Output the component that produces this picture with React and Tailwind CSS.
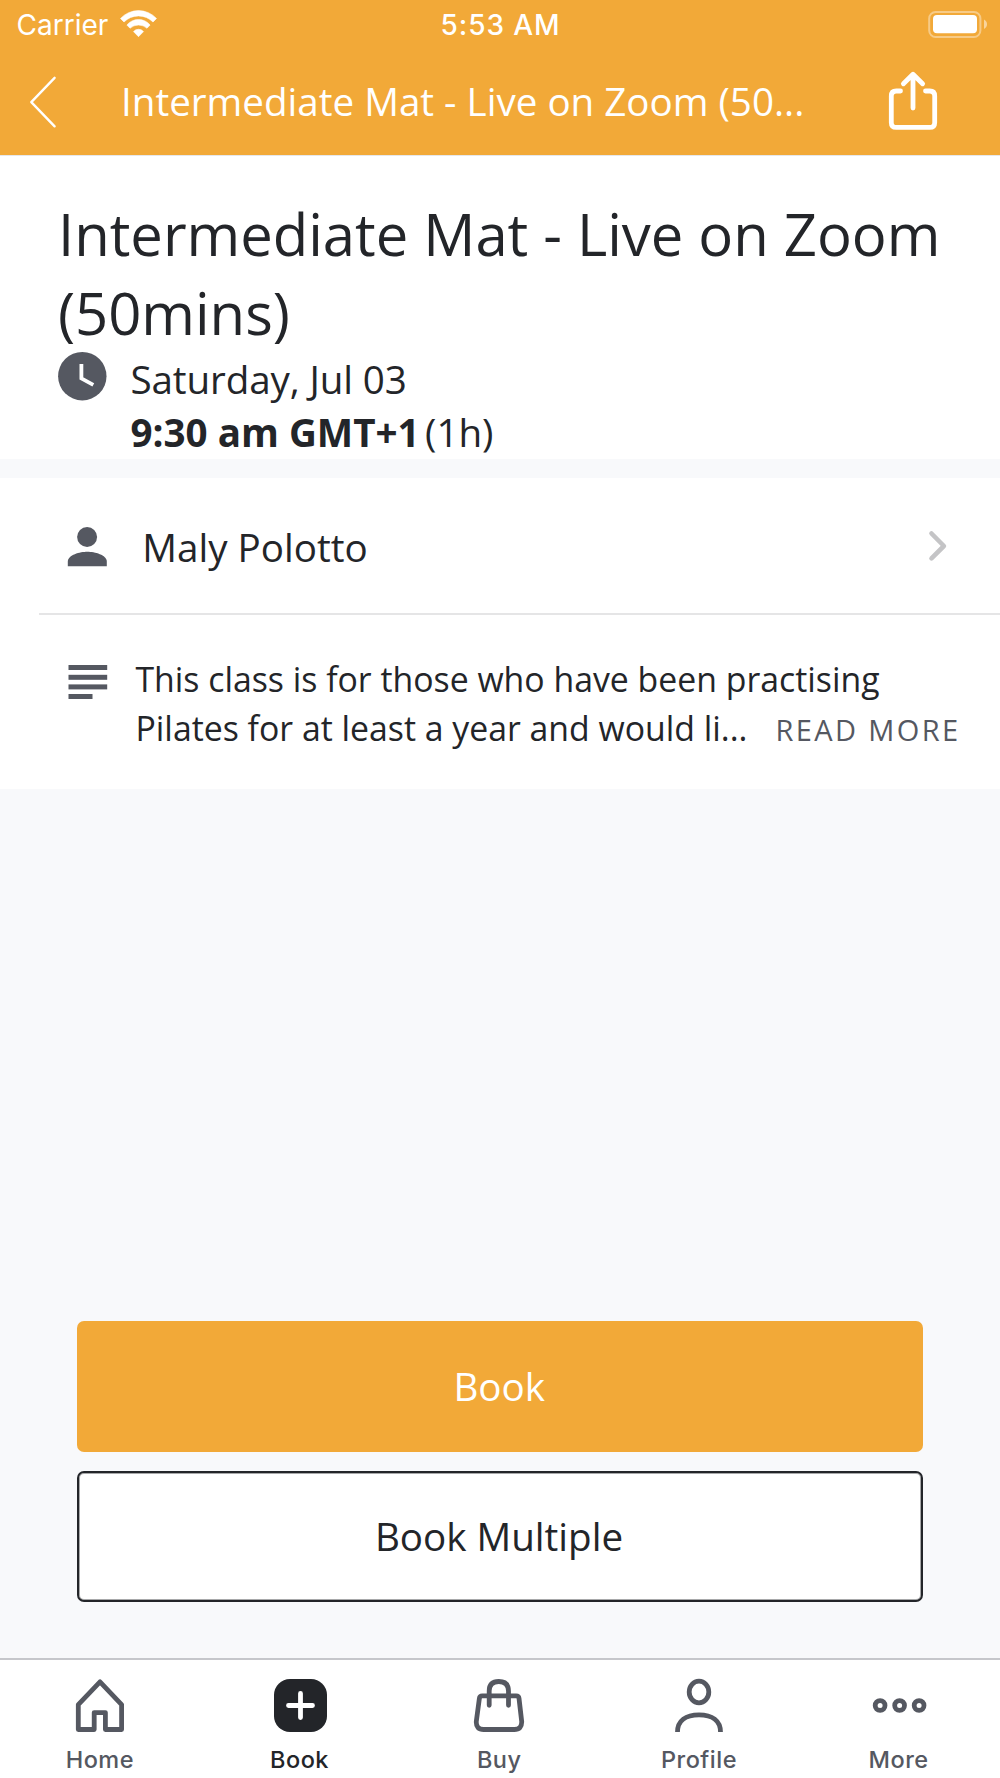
import React from "react";

function StatusBar() {
  return (
    <div className="flex h-[48px] items-start justify-between text-[28px] leading-[51px]">
      <div className="flex w-[380px] items-start pl-[16.5px]">
        <span className="w-[103.5px] whitespace-nowrap">Carrier</span>
        <svg className="mt-[8px]" width="37" height="30" viewBox="120 8 37 30" fill="white" stroke="white" strokeWidth="0.6" strokeLinejoin="round">
          <path d="M120.5 18.5A24.5 24.5 0 0 1 156.5 18.5L153 22A20.3 20.3 0 0 0 124 22Z" />
          <path d="M126.9 25A15 15 0 0 1 150.1 25L147 28.2A13 13 0 0 0 130 28.2Z" />
          <path d="M133.5 31.6A6.6 6.6 0 0 1 143.5 31.6L138.5 36.7Z" />
        </svg>
      </div>
      <span className="whitespace-nowrap pl-px font-[550] tracking-[0.9px]">5:53 AM</span>
      <div className="flex w-[380px] justify-end pr-[12px]">
        <svg className="mt-[8px]" width="62" height="32" viewBox="926 8 62 32">
          <rect x="929.2" y="12" width="51.2" height="25" rx="6.5" fill="none" stroke="white" strokeOpacity="0.4" strokeWidth="2" />
          <rect x="933" y="15" width="44" height="18.3" rx="4" fill="white" />
          <path d="M984 19.5C988 21.5 988 27 984 29Z" fill="white" fillOpacity="0.5" />
        </svg>
      </div>
    </div>
  );
}

function Header() {
  return (
    <header className="h-[155px] shrink-0 bg-[#f2a938] text-white">
      <StatusBar />
      <div className="flex h-[106px] items-center">
        <svg className="ml-[28px] shrink-0" width="30" height="54" viewBox="28 74 30 54" fill="none" stroke="white" strokeWidth="2.4" strokeLinecap="round" strokeLinejoin="round">
          <path d="M54.6 77.8L31.3 102.2L54.6 126.3" />
        </svg>
        <h1 className="ml-[63px] mt-px w-[761.5px] whitespace-nowrap font-['Open_Sans',sans-serif] text-[38.6px] leading-[53px]">
          Intermediate Mat - Live on Zoom (50...
        </h1>
        <svg className="-mt-[2px] shrink-0" width="56" height="62" viewBox="883 69 56 62" fill="none" stroke="white" strokeWidth="4.8" strokeLinecap="round" strokeLinejoin="round">
          <path d="M900.5 91H896.3Q891.3 91 891.3 96V122.4Q891.3 127.4 896.3 127.4H929.7Q934.7 127.4 934.7 122.4V96Q934.7 91 929.7 91H925.5" />
          <path d="M913 108V74.5M903.4 83.8L913 74.2L922.6 83.8" />
        </svg>
      </div>
    </header>
  );
}

const tabs = [
  {
    label: "Home",
    icon: <path d="M100 1681.8L78.3 1704.6V1729.5H94.2V1712.6H105.4V1729.5H121.6V1704.6Z" />,
    box: "70 1676 60 60",
  },
  {
    label: "Book",
    active: true,
    icon: (
      <>
        <rect x="274" y="1679" width="53" height="53" rx="16" fill="#232529" stroke="none" />
        <path d="M300.5 1693.5V1717.5M288.5 1705.5H312.5" stroke="white" />
      </>
    ),
    box: "270 1676 60 60",
  },
  {
    label: "Buy",
    icon: (
      <>
        <path d="M482.5 1695.8H516.5Q519 1695.8 519.3 1698.3L522 1721.5Q522.3 1729.5 514.5 1729.5H484Q476.2 1729.5 476.6 1721.5L479.7 1698.3Q480 1695.8 482.5 1695.8Z" />
        <path d="M489.5 1705.3V1691Q489.5 1681.5 499.1 1681.5T508.8 1691V1705.3" />
      </>
    ),
    box: "469.3 1676 60 60",
  },
  {
    label: "Profile",
    icon: (
      <>
        <ellipse cx="699" cy="1692" rx="9.8" ry="10.8" />
        <path d="M677.5 1732C677.5 1720.5 686 1714.8 699 1714.8S720.5 1720.5 720.5 1732" strokeLinecap="butt" />
      </>
    ),
    box: "669 1676 60 60",
  },
  {
    label: "More",
    icon: (
      <>
        <circle cx="879.8" cy="1705.5" r="4.9" />
        <circle cx="899.3" cy="1705.5" r="4.9" />
        <circle cx="918.8" cy="1705.5" r="4.9" />
      </>
    ),
    box: "868.7 1676 60 60",
  },
];

function TabBar() {
  return (
    <nav className="grid h-[120px] shrink-0 grid-cols-5 border-t-2 border-[#c6c7cb] bg-white pr-[1.5px]">
      {tabs.map((tab) => (
        <div key={tab.label} className={tab.active ? "flex flex-col items-center pt-[16px] text-[#232529]" : "flex flex-col items-center pt-[16px] text-[#555861]"}>
          <svg className="shrink-0" width="60" height="60" viewBox={tab.box} fill="none" stroke="currentColor" strokeWidth="4.8" strokeLinecap="round" strokeLinejoin="round">
            {tab.icon}
          </svg>
          <span className="mt-[8px] text-[23.5px] font-[460] leading-[32px] tracking-[0.5px]">{tab.label}</span>
        </div>
      ))}
    </nav>
  );
}

export default function App() {
  return (
    <div className="flex h-[1778px] w-[1000px] flex-col overflow-hidden bg-[#f8f9fb] font-['Inter',sans-serif] text-[#232529]">
      <Header />

      <main className="flex grow flex-col font-['Open_Sans',sans-serif]">
        <section className="h-[304px] border-t border-[#e6e7ea] bg-white pl-[58px] pt-[38px]">
          <h2 className="w-[900px] text-[58px] leading-[79px] tracking-[-0.03px]">
            Intermediate Mat - Live on Zoom
            <br />
            (50mins)
          </h2>
          <div className="flex">
            <svg className="mt-0 shrink-0" width="50" height="50" viewBox="58 352 50 50">
              <circle cx="82.3" cy="376.2" r="24.2" fill="#555861" />
              <path d="M81.4 364V378.3L93.3 384.8" fill="none" stroke="white" strokeWidth="3.8" />
            </svg>
            <div className="ml-[22.5px] mt-px text-[38.6px] leading-[53.4px]">
              <p className="tracking-[-0.12px]">Saturday, Jul 03</p>
              <p className="flex">
                <span className="w-[294.5px] font-bold">9:30 am GMT+1</span>
                <span>(1h)</span>
              </p>
            </div>
          </div>
        </section>

        <section className="mt-[19px] h-[311px] bg-white">
          <div className="flex h-[135px] items-center pl-[67px]">
            <svg className="-mt-px shrink-0" width="40" height="44" viewBox="67 523 40 44" fill="#555861">
              <circle cx="87.1" cy="537" r="10" />
              <path d="M67.8 566.2V561.5C67.8 555 80 551.8 87.3 551.8S106.8 555 106.8 561.5V566.2Z" />
            </svg>
            <span className="ml-[35.3px] mt-[4px] w-[783.7px] text-[38.6px] leading-[53px]">Maly Polotto</span>
            <svg width="22" height="34" viewBox="926.5 529 22 34" fill="none" stroke="#c4c4c6" strokeWidth="4.6" strokeLinecap="round" strokeLinejoin="round">
              <path d="M932 533.5L944.4 546L932 558.4" />
            </svg>
          </div>
          <hr className="ml-[39px] h-[2px] border-0 bg-[#e5e5e6]" />
          <div className="flex pl-[67.5px] pt-[40.4px]">
            <svg className="mt-[9.6px] w-[68px] shrink-0" width="68" height="34" viewBox="67.5 665 68 34" fill="#555861">
              <rect x="68" y="665" width="38.7" height="5" />
              <rect x="68" y="674.8" width="38.7" height="5" />
              <rect x="68" y="684.4" width="38.7" height="5" />
              <rect x="68" y="694" width="24" height="5" />
            </svg>
            <div className="text-[33.8px] leading-[48.3px]">
              <p>This class is for those who have been practising</p>
              <div className="flex">
                <p className="w-[640px]">Pilates for at least a year and would li...</p>
                <button className="mt-[2.6px] whitespace-nowrap text-[29px] leading-[48px] tracking-[2.38px] text-[#555861]">READ MORE</button>
              </div>
            </div>
          </div>
        </section>

        <div className="mt-auto flex flex-col gap-[19px] px-[77px] pb-[56px] text-[38.6px]">
          <button className="h-[131px] rounded-[7px] bg-[#f2a938] pr-[1.5px] pt-px text-white">Book</button>
          <button className="h-[131px] rounded-[7px] border-2 border-[#232529] bg-white pr-[2px] pt-px shadow-[inset_0_0_0_1px_#23252966]">Book Multiple</button>
        </div>
      </main>

      <TabBar />
    </div>
  );
}
